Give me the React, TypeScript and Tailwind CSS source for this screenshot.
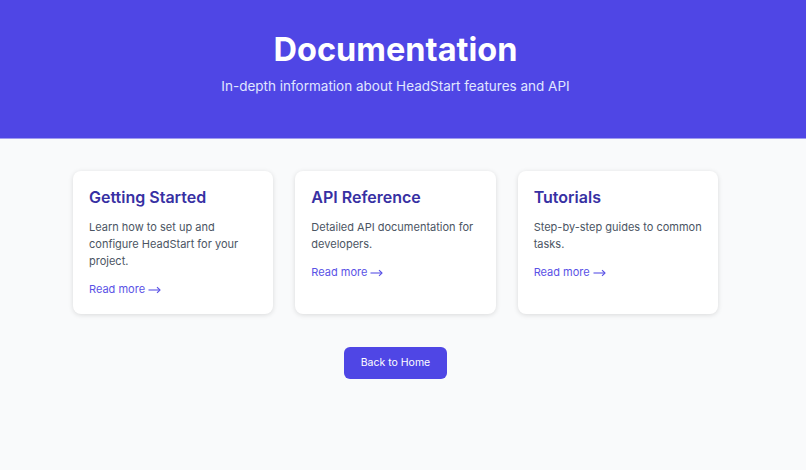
const docs = [
  {
    title: "Getting Started",
    body: "Learn how to set up and configure HeadStart for your project.",
  },
  {
    title: "API Reference",
    body: "Detailed API documentation for developers.",
  },
  {
    title: "Tutorials",
    body: "Step-by-step guides to common tasks.",
  },
];

function Arrow() {
  return (
    <svg
      width="13"
      height="8"
      viewBox="0 0 13 8"
      fill="none"
      stroke="currentColor"
      strokeWidth="1.1"
      className="inline-block ml-[3px] -mt-[1px] align-middle"
    >
      <path d="M0.5 4H12" />
      <path d="M9 1.2L12 4L9 6.8" strokeLinejoin="round" />
    </svg>
  );
}

function DocCard({ title, body }: { title: string; body: string }) {
  return (
    <div className="bg-white rounded-lg shadow-[0_1px_5px_rgba(0,0,0,0.13)] px-4 pt-[15px] pb-[16px]">
      <h3 className="text-[16px] leading-[22px] font-semibold text-[#3730a3]">
        {title}
      </h3>
      <p className="mt-[11px] text-[11px] leading-[17px] text-[#4b5563]">
        {body}
      </p>
      <a
        href="#"
        className="block mt-[11px] text-[11px] leading-[17px] text-[#5a52e6]"
      >
        Read more
        <Arrow />
      </a>
    </div>
  );
}

export default function App() {
  return (
    <div
      className="min-h-[470px] bg-[#f9fafb]"
      style={{ fontFamily: "Inter, 'Noto Sans', sans-serif" }}
    >
      <header className="bg-[#4f46e5] h-[139px] border-b border-[#9f9bf0]">
        <div className="w-[791px] pt-[30px] text-center text-white">
          <h1 className="text-[32.5px] leading-[40px] font-bold">
            Documentation
          </h1>
          <p className="mt-[6px] text-[13.5px] leading-[20px] text-[#e0e7ff]">
            In-depth information about HeadStart features and API
          </p>
        </div>
      </header>
      <div className="w-[791px]">
        <div className="w-[645px] mx-auto pt-[32px]">
          <div className="grid grid-cols-3 gap-[22px]">
            {docs.map((d) => (
              <DocCard key={d.title} title={d.title} body={d.body} />
            ))}
          </div>
          <div className="flex justify-center mt-[33px]">
            <button className="bg-[#4f46e5] text-white text-[10.5px] leading-[16px] h-[32px] w-[103px] rounded-md">
              Back to Home
            </button>
          </div>
        </div>
      </div>
    </div>
  );
}
